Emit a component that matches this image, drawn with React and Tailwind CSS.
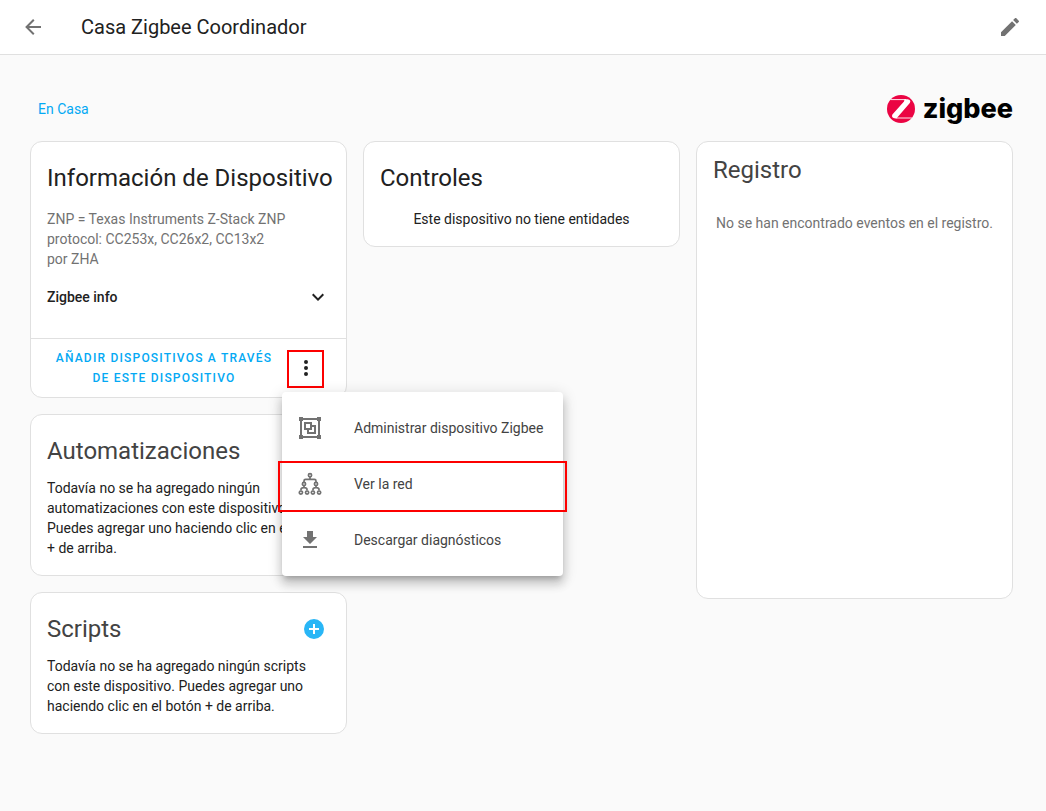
import React from 'react';

const icons = {
  arrowLeft: 'M20,11V13H8L13.5,18.5L12.08,19.92L4.16,12L12.08,4.08L13.5,5.5L8,11H20Z',
  pencil:
    'M20.71,7.04C21.1,6.65 21.1,6 20.71,5.63L18.37,3.29C18,2.9 17.35,2.9 16.96,3.29L15.12,5.12L18.87,8.87M3,17.25V21H6.75L17.81,9.93L14.06,6.18L3,17.25Z',
  chevronDown: 'M7.41,8.58L12,13.17L16.59,8.58L18,10L12,16L6,10L7.41,8.58Z',
  dots:
    'M12,16A2,2 0 0,1 14,18A2,2 0 0,1 12,20A2,2 0 0,1 10,18A2,2 0 0,1 12,16M12,10A2,2 0 0,1 14,12A2,2 0 0,1 12,14A2,2 0 0,1 10,12A2,2 0 0,1 12,10M12,4A2,2 0 0,1 14,6A2,2 0 0,1 12,8A2,2 0 0,1 10,6A2,2 0 0,1 12,4Z',
  plusCircle:
    'M17,13H13V17H11V13H7V11H11V7H13V11H17M12,2A10,10 0 0,0 2,12A10,10 0 0,0 12,22A10,10 0 0,0 22,12A10,10 0 0,0 12,2Z',
  group:
    'M1,1V5H2V19H1V23H5V22H19V23H23V19H22V5H23V1H19V2H5V1M5,4H19V5H20V19H19V20H5V19H4V5H5M6,6V14H9V18H18V9H14V6M8,8H12V12H8M14,11H16V16H11V14H14',
  download: 'M5,20H19V18H5M19,9H15V3H9V9H5L12,16L19,9Z',
};

const Icon = ({ path, className = '' }) => (
  <svg viewBox="0 0 24 24" fill="currentColor" aria-hidden="true" className={`size-6 shrink-0 ${className}`}>
    <path d={path} />
  </svg>
);

const NetworkIcon = () => (
  <svg viewBox="0 0 24 24" fill="none" stroke="currentColor" strokeWidth="1.7" aria-hidden="true" className="size-6 shrink-0">
    <circle cx="12" cy="3.2" r="1.6" />
    <path d="M12 5V7.4M6 10V9Q6 7.400 7.600 7.400H16.400Q18 7.400 18 9V10" />
    {[6, 18].map((x) => (
      <g key={x}>
        <circle cx={x} cy="12" r="1.6" />
        <path d={`M${x} 13.6V15.4M${x - 3} 18.600V17.600Q${x - 3} 15.600 ${x} 15.600Q${x + 3} 15.600 ${x + 3} 17.600V18.600`} />
        <circle cx={x - 3.1} cy="20.6" r="1.6" />
        <circle cx={x + 3.1} cy="20.6" r="1.6" />
      </g>
    ))}
  </svg>
);

const ZigbeeLogo = () => (
  <div className="flex items-center gap-2 text-black">
    <svg viewBox="0 0 28 28" className="size-7 shrink-0" aria-hidden="true">
      <circle cx="14" cy="14" r="14" fill="#eb0443" />
      <path d="M3.5 4.6H19M9 23H25" fill="none" stroke="#fff" strokeWidth="0.9" />
      <path d="M17.500 4.200H20.500Q24.600 4.800 22.800 8L10.500 22.200Q9.800 23.400 8.500 23.400Q3.800 23 5.400 19.600L17 6.500Z" fill="#fff" />
    </svg>
    <span className="font-['Inter'] text-[27px] leading-8 font-extrabold">zigbee</span>
  </div>
);

const Card = ({ children }) => (
  <section className="rounded-xl border border-[#e0e0e0] bg-white">{children}</section>
);

const menuItems = [
  { label: 'Administrar dispositivo Zigbee', icon: <Icon path={icons.group} /> },
  { label: 'Ver la red', icon: <NetworkIcon />, marked: true },
  { label: 'Descargar diagnósticos', icon: <Icon path={icons.download} /> },
];

const OverflowMenu = () => (
  <div className="relative mx-1.5">
    <button aria-label="Más opciones" className="flex h-[38px] w-[37px] items-start justify-center border-2 border-[#fd0000] pt-1">
      <Icon path={icons.dots} />
    </button>
    <ul className="absolute top-full -left-[5px] z-10 mt-1 min-w-[281px] rounded bg-white py-2 shadow-[0_5px_5px_-3px_rgba(0,0,0,0.2),0_8px_10px_1px_rgba(0,0,0,0.14),0_3px_14px_2px_rgba(0,0,0,0.12)]">
      {menuItems.map((item) => (
        <li key={item.label} className="relative">
          <button className="flex h-14 w-full items-center gap-8 px-4 text-[#727272]">
            {item.icon}
            <span className="whitespace-nowrap text-[#434343]">{item.label}</span>
          </button>
          {item.marked && (
            <div className="pointer-events-none absolute -inset-x-1 top-[5px] bottom-0 border-2 border-[#fd0000]" />
          )}
        </li>
      ))}
    </ul>
  </div>
);

const RelatedCard = ({ title, children }) => (
  <Card>
    <div className="flex items-center justify-between px-4 pt-3 pb-[3px]">
      <h2 className="text-2xl leading-12 text-[#434343]">{title}</h2>
      <button aria-label={`Agregar ${title}`} className="mr-1 text-[#29b6f6]">
        <Icon path={icons.plusCircle} />
      </button>
    </div>
    <p className="px-4 pb-[17px]">{children}</p>
  </Card>
);

const App = () => {
  return (
    <div className="min-h-screen bg-[#fafafa] font-['Roboto',sans-serif] text-sm leading-5 text-[#212121]">
      <header className="flex h-[55px] items-center border-b border-[#e0e0e0] bg-white pr-6 pl-[21px]">
        <button aria-label="Atrás" className="text-[#727272]">
          <Icon path={icons.arrowLeft} />
        </button>
        <h1 className="ml-9 flex-1 text-xl">Casa Zigbee Coordinador</h1>
        <button aria-label="Editar" className="text-[#727272]">
          <Icon path={icons.pencil} />
        </button>
      </header>

      <main className="pr-[33px] pl-[30px]">
        <div className="flex h-[86px] items-center justify-between pt-[22px] pl-2">
          <a href="#casa" className="text-[#03a9f4]">En Casa</a>
          <ZigbeeLogo />
        </div>

        <div className="grid grid-cols-3 items-start gap-4">
          <div className="flex flex-col gap-4">
            <Card>
              <h2 className="px-4 pt-3 pb-[7px] text-2xl leading-12 whitespace-nowrap">Información de Dispositivo</h2>
              <div className="px-4 pb-[17px]">
                <div className="text-[#727272]">
                  <p>ZNP = Texas Instruments Z-Stack ZNP protocol: CC253x, CC26x2, CC13x2</p>
                  <p>por ZHA</p>
                </div>
                <button className="mt-1 flex h-12 w-full items-center justify-between font-medium">
                  Zigbee info
                  <Icon path={icons.chevronDown} />
                </button>
              </div>
              <div className="flex items-end border-t border-[#e0e0e0] px-4 py-[9px]">
                <button className="flex-1 text-xs leading-5 font-medium tracking-widest text-[#03a9f4] uppercase">
                  Añadir dispositivos a través de este dispositivo
                </button>
                <OverflowMenu />
              </div>
            </Card>

            <RelatedCard title="Automatizaciones">
              Todavía no se ha agregado ningún automatizaciones con este dispositivo. Puedes agregar uno haciendo clic en
              el botón + de arriba.
            </RelatedCard>

            <RelatedCard title="Scripts">
              Todavía no se ha agregado ningún scripts con este dispositivo. Puedes agregar uno haciendo clic en el botón
              + de arriba.
            </RelatedCard>
          </div>

          <Card>
            <h2 className="px-4 pt-3 pb-[7px] text-2xl leading-12">Controles</h2>
            <p className="px-4 pb-[17px] text-center">Este dispositivo no tiene entidades</p>
          </Card>

          <Card>
            <div className="min-h-[456px] px-4 pt-3">
              <h2 className="text-2xl leading-8 text-[#434343]">Registro</h2>
              <p className="mt-[27px] text-center whitespace-nowrap text-[#727272]">
                No se han encontrado eventos en el registro.
              </p>
            </div>
          </Card>
        </div>
      </main>
    </div>
  );
};

export default App;
